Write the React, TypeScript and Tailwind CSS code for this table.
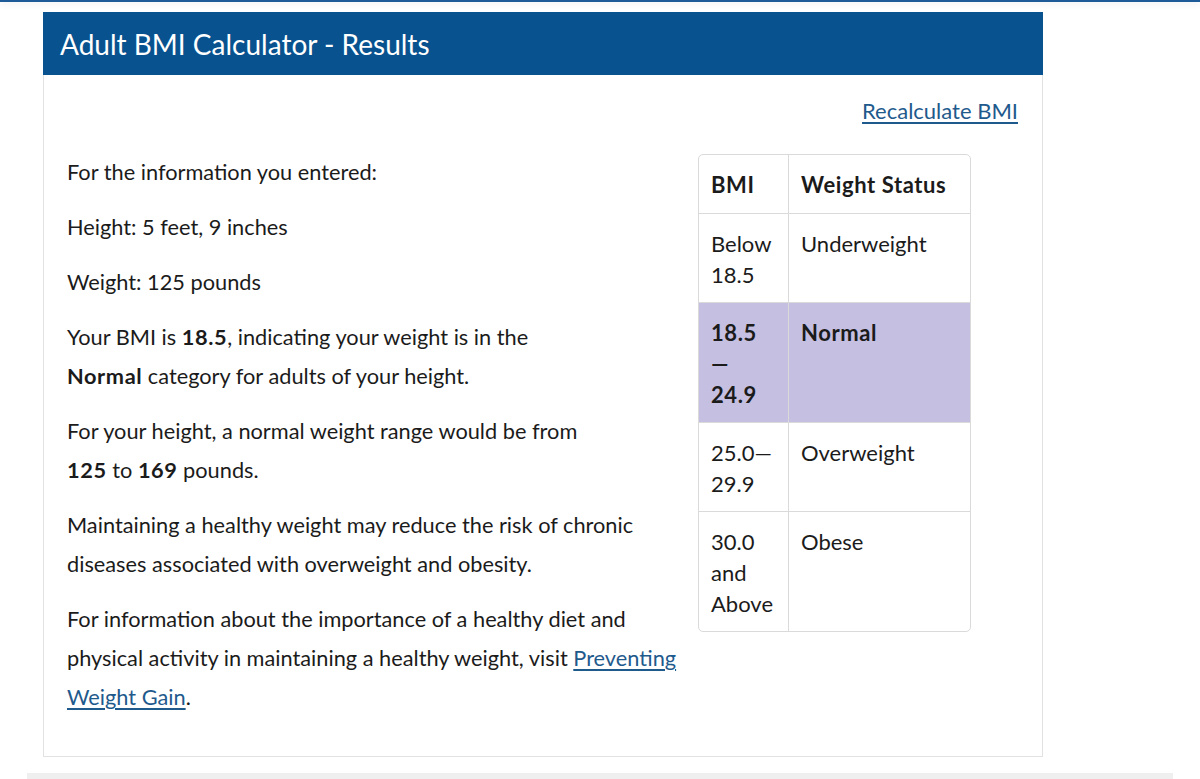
import React from "react";

const rows = [
  { bmi: ["Below", "18.5"], status: "Underweight", active: false },
  { bmi: ["18.5", "—", "24.9"], status: "Normal", active: true },
  { bmi: ["25.0—", "29.9"], status: "Overweight", active: false },
  { bmi: ["30.0", "and", "Above"], status: "Obese", active: false },
];

const BmiTable = () => {
  return (
    <div className="mt-[1px] w-[273px] shrink-0 rounded-[5px] border border-[#dadada] overflow-hidden text-[22px] leading-[31px]">
      <div className="flex font-bold tracking-[0.6px]">
        <div className="w-[90px] shrink-0 border-r border-[#dadada] px-[12px] pt-[14px] pb-[13px]">BMI</div>
        <div className="flex-1 px-[12px] pt-[14px] pb-[13px]">Weight Status</div>
      </div>
      {rows.map((r) => (
        <div
          key={r.status}
          className={
            r.active
              ? "flex border-t border-[#dadada] bg-[#c5bfe1] font-bold tracking-[0.6px]"
              : "flex border-t border-[#dadada]"
          }
        >
          <div className="w-[90px] shrink-0 border-r border-[#dadada] px-[12px] pt-[14px] pb-[12px]">
            {r.bmi.map((l) => (
              <div key={l}>{l}</div>
            ))}
          </div>
          <div className="flex-1 px-[12px] pt-[14px] pb-[12px]">{r.status}</div>
        </div>
      ))}
    </div>
  );
};

export default function App() {
  return (
    <div
      className="min-h-[779px] bg-white text-[#1b1b1b]"
      style={{ fontFamily: "Lato, 'Open Sans', sans-serif" }}
    >
      <div className="h-[2px] bg-[#1c5b98] shadow-[0_2px_6px_rgba(0,0,0,0.12)]" />

      <div className="ml-[43px] mt-[10px] w-[1000px]">
        <div className="flex h-[63px] items-center bg-[#08528f] px-[17px] text-[28px] text-white">
          Adult BMI Calculator - Results
        </div>

        <div className="h-[682px] border border-t-0 border-[#e2e2e2] pl-[23px] pr-[24px] pt-[21px]">
          <div className="flex justify-end">
            <a href="#" className="text-[22px] leading-[30px] text-[#1f5a8d] underline underline-offset-[3px]">
              Recalculate BMI
            </a>
          </div>

          <div className="mt-[27px] flex items-start">
            <div className="w-[631px] shrink-0 text-[21.75px] leading-[39px]">
              <p className="mb-[16px]">For the information you entered:</p>
              <p className="mb-[16px]">Height: 5 feet, 9 inches</p>
              <p className="mb-[16px]">Weight: 125 pounds</p>
              <p className="mb-[16px]">
                Your BMI is <b className="tracking-[0.6px]">18.5</b>, indicating your weight is in the
                <br />
                <b className="tracking-[0.6px]">Normal</b> category for adults of your height.
              </p>
              <p className="mb-[16px]">
                For your height, a normal weight range would be from
                <br />
                <b className="tracking-[0.6px]">125</b> to <b className="tracking-[0.6px]">169</b> pounds.
              </p>
              <p className="mb-[16px]">
                Maintaining a healthy weight may reduce the risk of chronic
                <br />
                diseases associated with overweight and obesity.
              </p>
              <p>
                For information about the importance of a healthy diet and
                <br />
                physical activity in maintaining a healthy weight, visit{" "}
                <a href="#" className="text-[#1f5a8d] underline underline-offset-[3px]">
                  Preventing
                  <br />
                  Weight Gain
                </a>
                .
              </p>
            </div>
            <BmiTable />
          </div>
        </div>
      </div>

      <div className="ml-[27px] mt-[16px] h-[6px] w-[1146px] bg-[#efefef]" />
    </div>
  );
}
